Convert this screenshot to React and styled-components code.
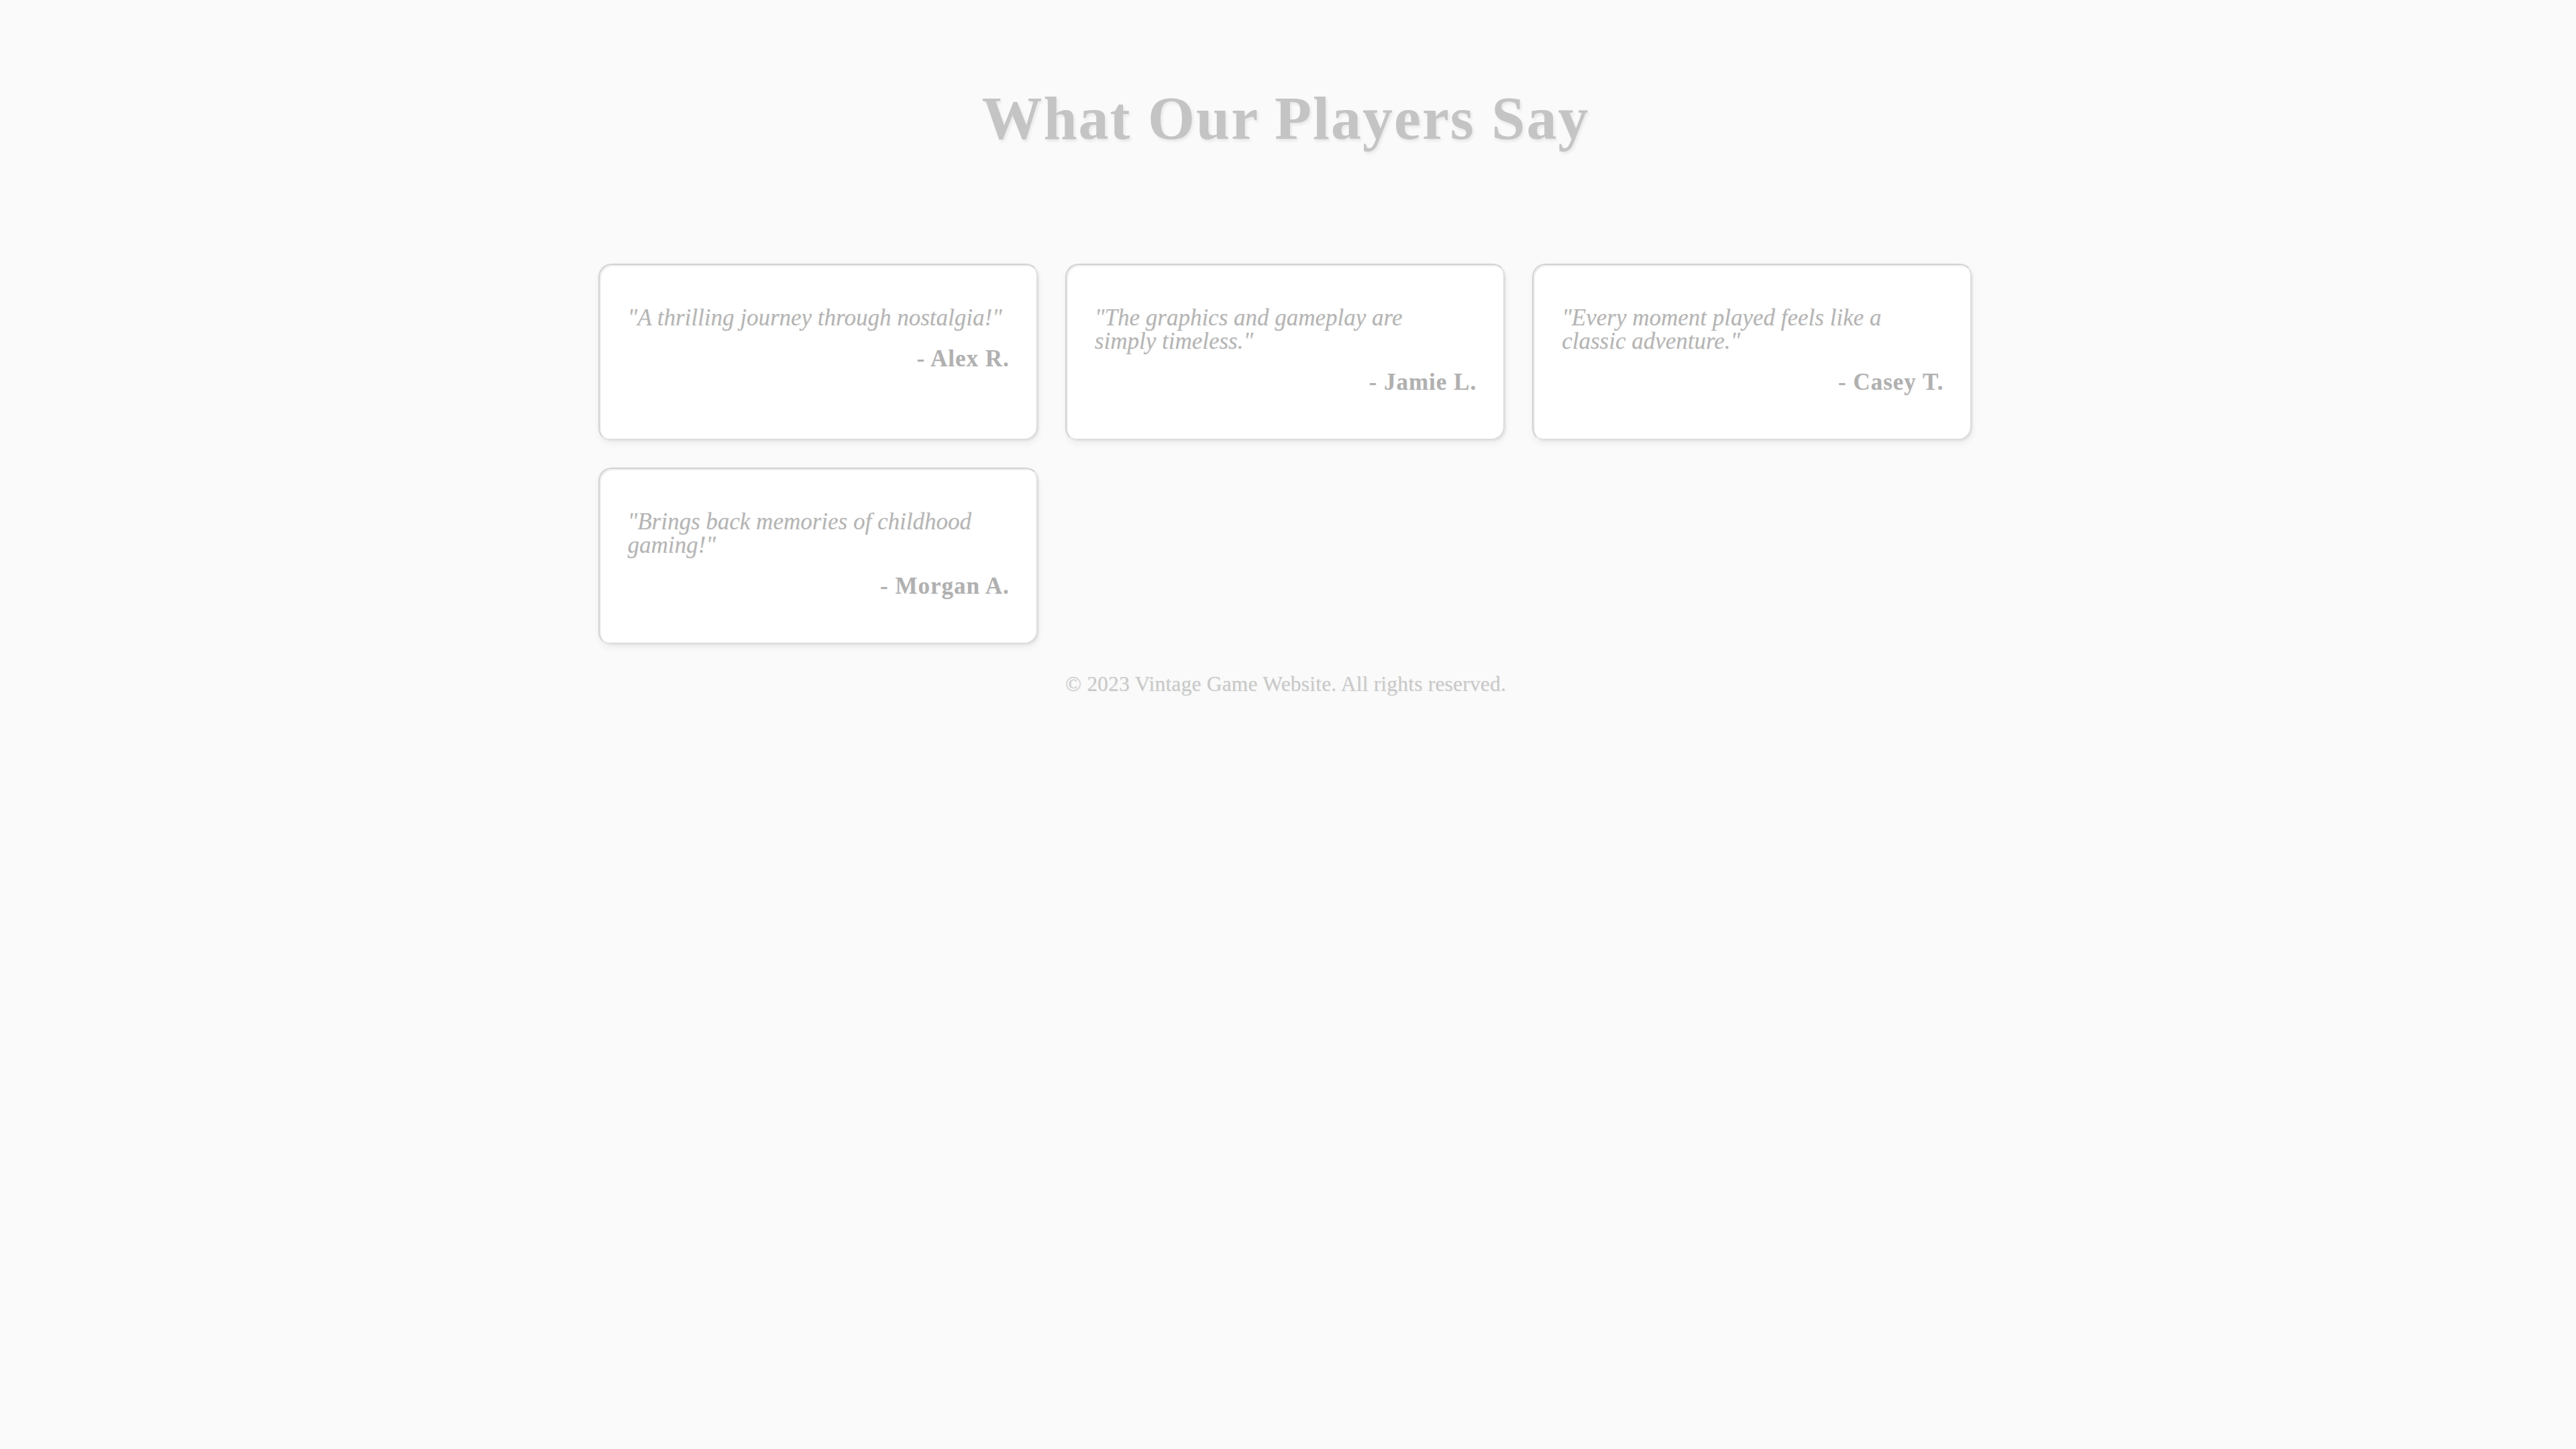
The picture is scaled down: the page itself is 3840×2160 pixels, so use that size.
import React from 'react';
import styled, { createGlobalStyle } from 'styled-components';

const testimonials = [
  { quote: '"A thrilling journey through nostalgia!"', author: '- Alex R.' },
  { quote: '"The graphics and gameplay are simply\u00a0timeless."', author: '- Jamie L.' },
  { quote: '"Every moment played feels like a classic adventure."', author: '- Casey T.' },
  { quote: '"Brings back memories of childhood gaming!"', author: '- Morgan A.' },
];

const App = () => {
  return (
    <>
      <GlobalStyle />
      <Page>
        <Title>What Our Players Say</Title>
        <Grid>
          {testimonials.map(t => (
            <Card key={t.author}>
              <Quote>{t.quote}</Quote>
              <Author>{t.author}</Author>
            </Card>
          ))}
        </Grid>
        <Footer>&copy; 2023 Vintage Game Website. All rights reserved.</Footer>
      </Page>
    </>
  );
};

export default App;

const GlobalStyle = createGlobalStyle`
  html, body {
    margin: 0;
    padding: 0;
    background: #fafafa;
  }

  body {
    min-height: 2160px;
    font-family: Georgia, "Liberation Serif", serif;
  }
`;

const Page = styled.div`
  display: flex;
  flex-direction: column;
  align-items: center;
  padding: 127px 7px 0 0;
`;

const Title = styled.h1`
  margin: 0;
  font-family: "Liberation Serif", serif;
  font-size: 90px;
  line-height: 100px;
  letter-spacing: 2px;
  font-weight: bold;
  color: #c4c4c4;
  text-shadow: 2px 3px 4px rgba(0, 0, 0, 0.08);
`;

const Grid = styled.div`
  display: grid;
  grid-template-columns: repeat(3, 1fr);
  gap: 39px;
  width: 2050px;
  margin-top: 166px;
`;

const Card = styled.div`
  background: #fff;
  border: 2px solid;
  border-color: #d2d2d2 #e6e6e6 #e6e6e6 #d2d2d2;
  border-radius: 20px;
  box-shadow: inset 2px 2px 0 #efefef, inset -2px -2px 0 #dcdcdc,
    0 4px 10px rgba(0, 0, 0, 0.05);
  padding: 61px 42px 42px;
  display: flex;
  flex-direction: column;
`;

const Quote = styled.p`
  margin: 0 0 27px;
  font-family: "Liberation Serif", serif;
  font-style: italic;
  font-size: 35px;
  line-height: 35px;
  color: #b4b4b4;
  text-shadow: 1px 1px 2px rgba(0, 0, 0, 0.06);
`;

const Author = styled.p`
  margin: 0 0 27px;
  text-align: right;
  font-family: "Liberation Serif", serif;
  font-weight: bold;
  font-size: 35px;
  line-height: 34px;
  letter-spacing: 1px;
  color: #b0b0b0;
  text-shadow: 1px 1px 2px rgba(0, 0, 0, 0.06);
`;

const Footer = styled.footer`
  margin-top: 40px;
  font-family: "Liberation Serif", serif;
  font-size: 31.5px;
  line-height: 36px;
  letter-spacing: 0.2px;
  color: #c8c8c8;
  text-shadow: 1px 1px 2px rgba(0, 0, 0, 0.06);
`;
